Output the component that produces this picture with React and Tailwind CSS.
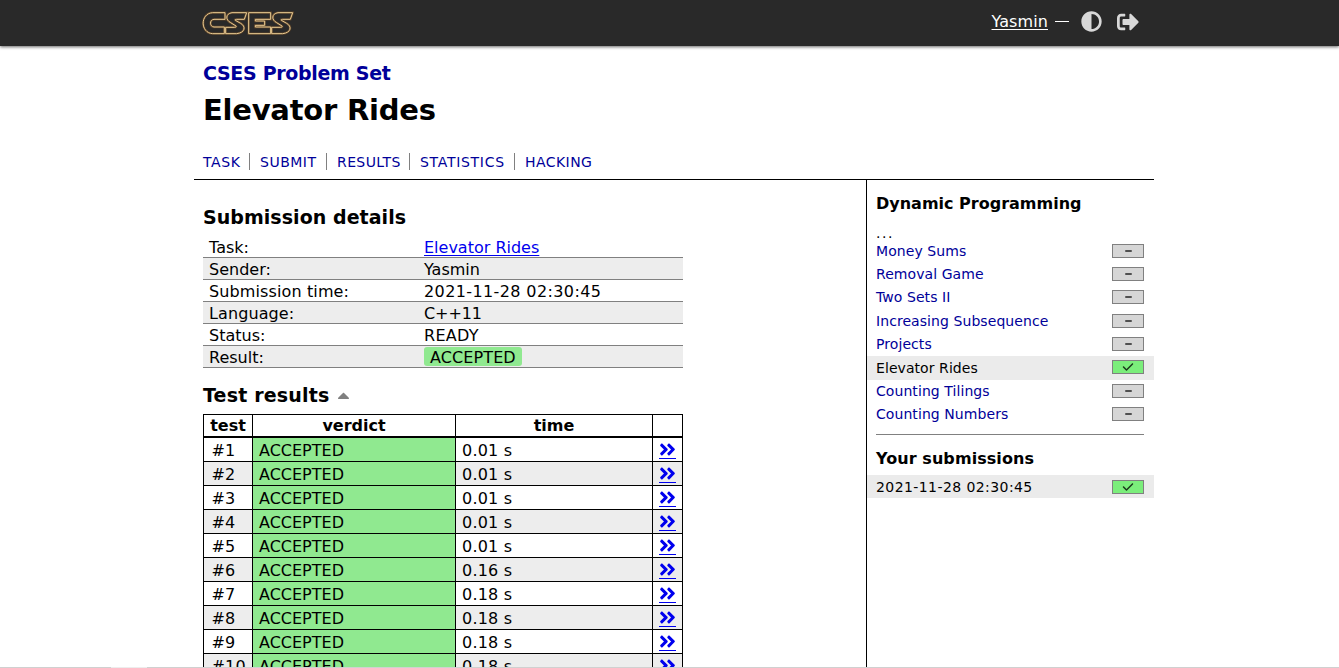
import { FaAdjust, FaSignOutAlt, FaAngleDoubleRight, FaCaretUp } from "react-icons/fa";
import { FaCheck } from "react-icons/fa6";

const details = [
  ["Task:", "Elevator Rides", "", ""],
  ["Sender:", "Yasmin", "", ""],
  ["Submission time:", "2021-11-28 02:30:45", "tracking-[0.12px]", "tracking-[0.39px]"],
  ["Language:", "C++11", "tracking-[0.1px]", "tracking-[-0.1px]"],
  ["Status:", "READY", "", "tracking-[0.3px]"],
  ["Result:", "ACCEPTED", "", "tracking-[0.1px]"],
];
const times = ["0.01 s", "0.01 s", "0.01 s", "0.01 s", "0.01 s", "0.16 s", "0.18 s", "0.18 s", "0.18 s", "0.18 s"];
const problems = ["Money Sums", "Removal Game", "Two Sets II", "Increasing Subsequence", "Projects", "Elevator Rides", "Counting Tilings", "Counting Numbers"];
const tabs = [
  ["TASK", "w-[46px] tracking-[0.6px]"],
  ["SUBMIT", "w-[77px] tracking-[0.5px]"],
  ["RESULTS", "w-[83px] tracking-[0.4px]"],
  ["STATISTICS", "w-[105px] tracking-[0.7px]"],
  ["HACKING", "w-[90px] tracking-[0.45px]"],
];

const letterS = "M170 38H126C106 41 106 60 122 68L138 78C140 81 137 82 134 82H107V101H140C166 98 168 79 152 70L136 61C134 59 136 58 140 58H163Z";

function Logo() {
  return (
    <svg className="mt-[11px] block h-6 w-[92px]" viewBox="36 33 276 72" fill="none">
      <defs>
        <g id="letters">
          <path d="M105 38H68C30 40 30 99 68 101H103V81H72C58 80 58 59 72 58H105Z" />
          <path d={letterS} />
          <path d="M176 38H242V58H196V63H224V76H196V81H242V101H176Z" />
          <path d={letterS} transform="translate(138 0)" />
        </g>
      </defs>
      <use href="#letters" stroke="#80582c" strokeWidth="7" opacity="0.6" />
      <use href="#letters" stroke="#e9cb92" strokeWidth="3" />
    </svg>
  );
}

function Score({ ok }) {
  return (
    <span className={"-mt-[1.4px] flex h-[14px] w-8 items-center justify-center border border-[#808080] " + (ok ? "bg-[#7bee7b] text-[#1c3a1c]" : "bg-[#d6d6d6]")}>
      {ok ? <FaCheck className="h-3 w-3" /> : <span className="h-0.5 w-[7px] rounded-[1px] bg-[#505050]" />}
    </span>
  );
}

export default function App() {
  return (
    <div className="relative h-[668px] w-[1339px] overflow-hidden bg-white font-['DejaVu_Sans',sans-serif] text-base text-black">
      <header className="h-[46px] bg-[#292929] shadow-[0_1px_3px_rgba(0,0,0,0.6)]">
        <div className="ml-[202px] flex w-[937px] justify-between">
          <Logo />
          <div className="flex h-[43px] items-center text-white">
            <a className="tracking-[0.1px] underline underline-offset-2">Yasmin</a>
            <span className="ml-[7px] h-px w-[14px] bg-white" />
            <FaAdjust className="ml-3 h-[21px] w-[21px] text-[#d8d8d8]" />
            <FaSignOutAlt className="ml-[15px] h-[22px] w-[22px] text-[#d8d8d8]" />
          </div>
        </div>
      </header>
      <div className="ml-[194px] w-[960px]">
        <div className="h-[134px] border-b border-black pt-[15px] pl-[9px]">
          <h3 className="text-[19px] leading-6 font-bold tracking-[-0.32px] text-[#000099]">CSES Problem Set</h3>
          <h1 className="mt-[5px] text-[29px] leading-10 font-bold tracking-[-0.24px]">Elevator Rides</h1>
          <nav className="mt-[23px] flex text-[14px] leading-[19px] text-[#000099]">
            {tabs.map(([t, c], i) => (
              <a key={t} className={c + (i ? " h-[17px] border-l border-[#808080] pl-2.5" : "")}>{t}</a>
            ))}
          </nav>
        </div>
        <div className="flex">
          <main className="w-[672px] pt-[25px] pl-[9px]">
            <h2 className="text-[19px] leading-6 font-bold tracking-[0.05px]">Submission details</h2>
            <div className="mt-[7px] w-[480px]">
              {details.map(([a, b, ca, cb], i) => (
                <div key={a} className="flex h-[22px] border-b border-[#808080] pl-1.5 leading-[23px] even:bg-[#ededed]">
                  <span className={"w-[215px] " + ca}>{a}</span>
                  {i === 0 ? (
                    <a className="text-[#0000ee] underline underline-offset-2">{b}</a>
                  ) : i === 5 ? (
                    <span className="mt-px h-[19px] rounded-[3px] bg-[#90e990] px-1.5 leading-[21px] tracking-[0.1px]">{b}</span>
                  ) : (
                    <span className={cb}>{b}</span>
                  )}
                </div>
              ))}
            </div>
            <h2 className="mt-[15px] flex items-center text-[19px] leading-6 font-bold tracking-[0.17px]">
              Test results <FaCaretUp className="mt-px ml-[5px] h-[19px] w-[19px] text-[#808080]" />
            </h2>
            <table className="mt-[7px] w-[480px] table-fixed border-collapse">
              <colgroup><col className="w-[49px]" /><col className="w-[203px]" /><col className="w-[197px]" /><col className="w-[30px]" /></colgroup>
              <thead>
                <tr className="h-[22px] leading-[20px]">
                  {["test", "verdict", "time", ""].map((h) => <th key={h} className="border border-b-2 border-black p-0 pt-px">{h}</th>)}
                </tr>
              </thead>
              <tbody>
                {times.map((t, i) => (
                  <tr key={i} className="h-6 leading-[21px] even:bg-[#ededed]">
                    <td className="border border-black p-0 pt-0.5 pl-[7.5px] tracking-[0.2px]">#{i + 1}</td>
                    <td className="border border-black bg-[#90e990] p-0 pt-0.5 pl-1.5">ACCEPTED</td>
                    <td className="border border-black p-0 pt-0.5 pl-1.5 tracking-[0.2px]">{t}</td>
                    <td className="border border-black p-0 pt-px">
                      <a className="mx-auto flex h-[18px] w-[17px] items-center border-b border-[#0000ee] text-[#0000ee]"><FaAngleDoubleRight className="-ml-px h-[19px] w-[19px] shrink-0" /></a>
                    </td>
                  </tr>
                ))}
              </tbody>
            </table>
          </main>
          <aside className="h-[500px] w-72 border-l border-black pt-3">
            <h4 className="pl-[9px] leading-[23px] font-bold">Dynamic Programming</h4>
            <div className="mt-[9px] h-[15.5px] pl-[9px] text-[14px] leading-[19px] tracking-[1.5px]">...</div>
            {problems.map((p, i) => (
              <div key={p} className={"flex h-[23.4px] items-center justify-between pr-2.5 pl-[9px] text-[14px] tracking-[0.07px] " + (i === 5 ? "bg-[#ebebeb]" : "text-[#000099]")}>
                <span>{p}</span><Score ok={i === 5} />
              </div>
            ))}
            <hr className="mt-[7.5px] mr-2.5 ml-[9px] border-[#808080]" />
            <h4 className="mt-3 pl-[9px] leading-[23px] font-bold tracking-[0.07px]">Your submissions</h4>
            <div className="mt-[5px] flex h-[23px] items-center justify-between bg-[#ebebeb] pr-2.5 pl-[9px] text-[14px] leading-6">
              <span className="pt-px tracking-[0.42px]">2021-11-28 02:30:45</span><div className="pt-0.5"><Score ok /></div>
            </div>
          </aside>
        </div>
      </div>
      <div className="absolute top-[667px] left-0 h-px w-full bg-[#d0d0d0]" />
      <div className="absolute top-[667px] left-[111px] h-px w-9 bg-[#ededed]" />
    </div>
  );
}
